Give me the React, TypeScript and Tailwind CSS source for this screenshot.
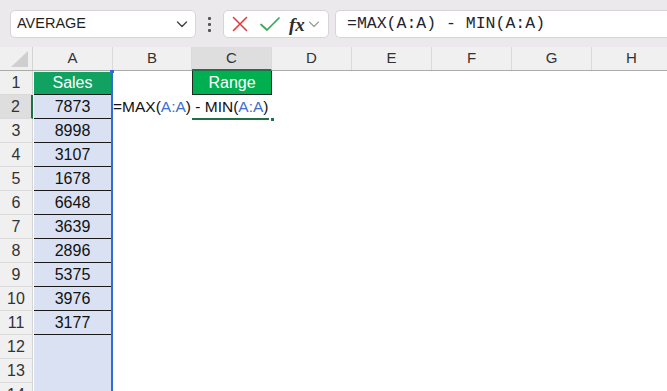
import React from "react";

const sales = [7873, 8998, 3107, 1678, 6648, 3639, 2896, 5375, 3976, 3177];
const cols = ["B", "C", "D", "E", "F", "G", "H"];

function TopBar() {
  return (
    <div className="h-[47px] bg-[#ebe9ec] flex items-start pt-[10px] pl-[10px] gap-0">
      {/* name box */}
      <div className="w-[186px] h-[28px] bg-white rounded-[5px] border border-[#d6d4d8] flex items-center justify-between pl-[6px] pr-[6px]">
        <span className="text-[14.5px] text-[#1f1f1f]">AVERAGE</span>
        <svg width="14" height="14" viewBox="0 0 14 14" fill="none">
          <path d="M2.5 5l4.5 4.5L11.5 5" stroke="#444" strokeWidth="1.4" strokeLinecap="round" strokeLinejoin="round" />
        </svg>
      </div>
      {/* dots */}
      <div className="w-[27px] h-[28px] flex flex-col items-center justify-center gap-[3px]">
        <div className="w-[3px] h-[3px] bg-[#555] rounded-[1px]" />
        <div className="w-[3px] h-[3px] bg-[#555] rounded-[1px]" />
        <div className="w-[3px] h-[3px] bg-[#555] rounded-[1px]" />
      </div>
      {/* formula controls */}
      <div className="w-[106px] h-[28px] bg-white rounded-[5px] border border-[#d6d4d8] flex items-center pl-[6px]">
        <svg width="20" height="20" viewBox="0 0 20 20" fill="none">
          <path d="M3.5 3.5l13 13M16.5 3.5l-13 13" stroke="#e5393b" strokeWidth="1.6" strokeLinecap="round" />
        </svg>
        <svg width="22" height="20" viewBox="0 0 22 20" fill="none" className="ml-[9px]">
          <path d="M2 10.5l6 5.5L20 4" stroke="#3aa656" strokeWidth="1.7" strokeLinecap="round" strokeLinejoin="round" />
        </svg>
        <span className="ml-[8px] text-[19px] italic font-bold text-[#2b2b2b] font-['Liberation_Serif',serif] leading-none">fx</span>
        <svg width="12" height="12" viewBox="0 0 12 12" fill="none" className="ml-[3px]">
          <path d="M1.5 4l4.5 4.5L10.5 4" stroke="#9a9a9a" strokeWidth="1.1" strokeLinecap="round" strokeLinejoin="round" />
        </svg>
      </div>
      {/* formula box */}
      <div className="ml-[6px] flex-1 h-[28px] bg-white rounded-l-[5px] border border-r-0 border-[#d6d4d8] flex items-center pl-[11px]">
        <span className="text-[16.5px] text-[#232330] font-['Liberation_Mono',monospace] whitespace-nowrap">=MAX(A:A) - MIN(A:A)</span>
      </div>
    </div>
  );
}

function HeaderRow() {
  return (
    <div className="flex h-[24px] bg-[#f0f0f0] border-b border-[#ababab] text-[15px] text-[#333]">
      <div className="w-[33px] shrink-0 border-r border-[#d4d4d4] relative">
        <svg width="18" height="16" viewBox="0 0 18 16" className="absolute right-[3px] bottom-[3px]">
          <path d="M17 0v16H0z" fill="#cfcfcf" />
        </svg>
      </div>
      <div className="w-[80px] shrink-0 flex items-center justify-center border-r border-[#dadada]">A</div>
      {cols.map((c, i) => (
        <div
          key={c}
          className={
            c === "C"
              ? "w-[80px] shrink-0 flex items-center justify-center bg-[#dedede] border-b-2 border-[#1e7145] -mb-[1px] border-r border-r-[#dadada]"
              : i === 0
              ? "w-[79px] shrink-0 flex items-center justify-center border-r border-[#dadada]"
              : "w-[80px] shrink-0 flex items-center justify-center border-r border-[#dadada]"
          }
        >
          {c}
        </div>
      ))}
    </div>
  );
}

function RowHead({ n }: { n: number }) {
  return (
    <div
      className={
        n === 2
          ? "w-[33px] shrink-0 bg-[#dedede] border-r-2 border-[#1e7145] border-b border-b-[#dadada] flex items-center justify-center text-[16px] text-[#333]"
          : "w-[33px] shrink-0 bg-[#f0f0f0] border-r border-[#d4d4d4] border-b border-b-[#dadada] flex items-center justify-center text-[16px] text-[#333]"
      }
    >
      {n}
    </div>
  );
}

export default function App() {
  const rows = Array.from({ length: 14 }, (_, i) => i + 1);

  return (
    <div className="w-[667px] h-[391px] overflow-hidden bg-white font-['Liberation_Sans',sans-serif]">
      <TopBar />
      <HeaderRow />
      {rows.map((n) => (
        <div key={n} className="flex h-[24px]">
          <RowHead n={n} />
          {/* column A (selected range) */}
          <div className="w-[80px] shrink-0 border-l border-white border-r-2 border-r-[#2f6ed3] bg-[#d9e1f2] relative">
            {n === 1 && (
              <>
                <div className="h-full bg-[#11a160] border-b border-[#1a1a1a] border-t border-t-[#e8f3ec] flex items-center justify-center text-[16px] text-white">
                  Sales
                </div>
                <div className="absolute -right-[3px] -top-[1px] w-[4px] h-[3px] bg-[#2f6ed3]" />
              </>
            )}
            {n >= 2 && n <= 11 && (
              <div className="h-full border-b border-[#1a1a1a] flex items-center justify-center text-[16px] text-[#111]">
                {sales[n - 2]}
              </div>
            )}
          </div>
          {/* column B */}
          <div className="w-[79px] shrink-0 relative">
            {n === 2 && (
              <div className="absolute left-0 top-0 h-full flex items-center whitespace-nowrap text-[15.5px] text-[#111] z-10">
                <span>=MAX(</span>
                <span className="text-[#3c6fd1]">A:A</span>
                <span>) - MIN(</span>
                <span className="text-[#3c6fd1]">A:A</span>
                <span>)</span>
              </div>
            )}
          </div>
          {/* column C */}
          <div className="w-[80px] shrink-0 relative">
            {n === 1 && (
              <div className="h-full bg-[#00b050] border-x border-b border-[#1e2a22] flex items-center justify-center text-[16px] text-white">
                Range
              </div>
            )}
            {n === 2 && (
              <>
                <div className="absolute left-0 bottom-[-1px] w-[77px] h-[2px] bg-[#1e7145]" />
                <div className="absolute left-[78px] bottom-[-3px] w-[5px] h-[5px] bg-[#1e7145] border border-white" />
              </>
            )}
          </div>
          <div className="flex-1" />
        </div>
      ))}
    </div>
  );
}
